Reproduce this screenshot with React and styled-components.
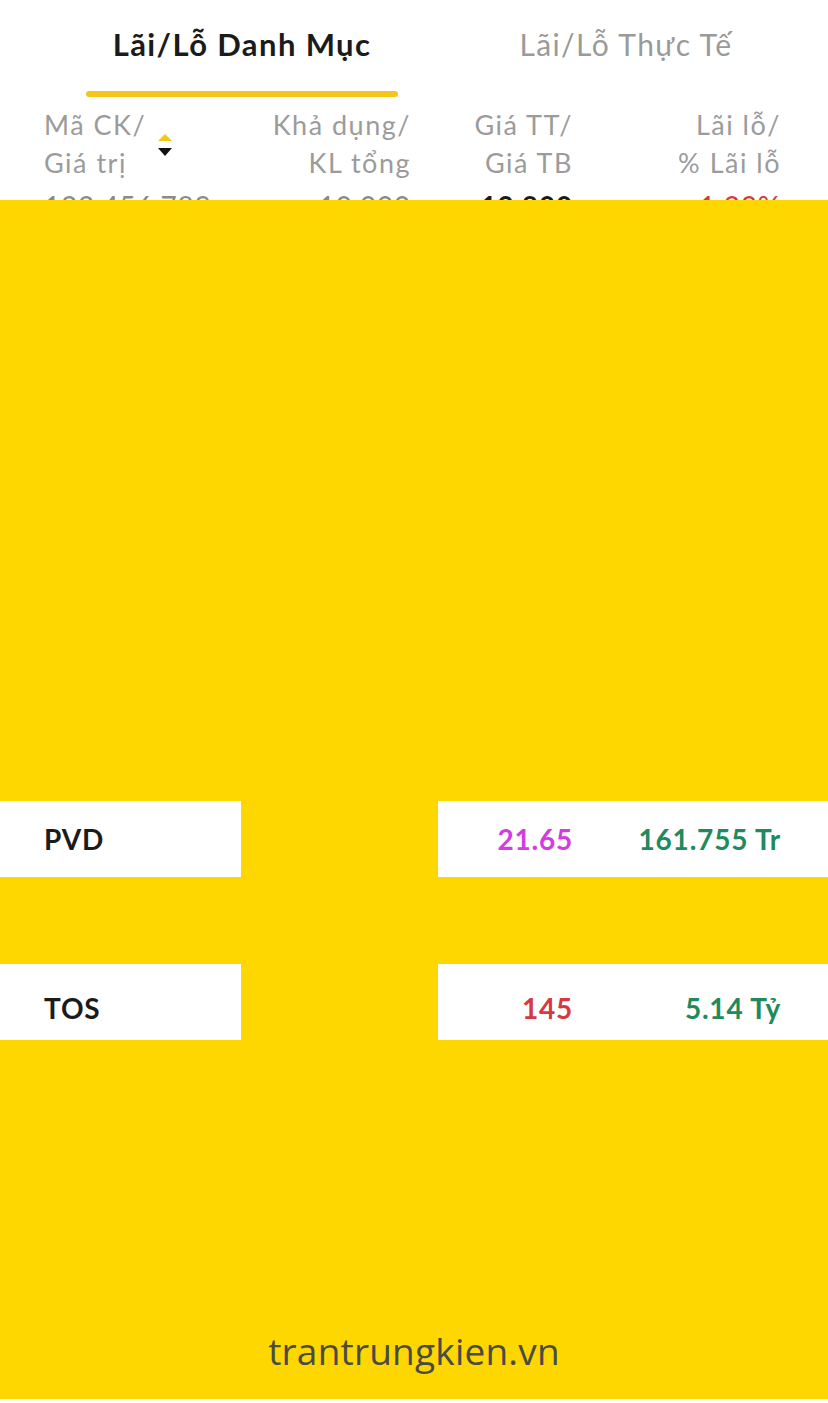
import React from "react";
import styled, { createGlobalStyle } from "styled-components";

const GlobalStyle = createGlobalStyle`
  html, body {
    margin: 0;
    padding: 0;
    background: #ffffff;
  }
  body {
    font-family: "Lato", "Open Sans", sans-serif;
  }
`;

const YELLOW = "#FED700";

const Page = styled.div`
  width: 828px;
  height: 1403px;
  display: flex;
  flex-direction: column;
  background: #ffffff;
`;

const Top = styled.div`
  height: 200px;
  flex-shrink: 0;
  overflow: hidden;
  display: flex;
  flex-direction: column;
  & > * {
    flex-shrink: 0;
  }
`;

const Tabs = styled.div`
  display: flex;
  padding: 0 0 0 50px;
  height: 97px;
`;

const Tab = styled.div`
  width: 384px;
  display: flex;
  flex-direction: column;
  align-items: center;
  padding-top: 23px;
  box-sizing: border-box;
  font-size: ${(p) => (p.active ? 31 : 30)}px;
  line-height: 42px;
  font-weight: ${(p) => (p.active ? 700 : 400)};
  color: ${(p) => (p.active ? "#1b1b1b" : "#9a9a9a")};
  letter-spacing: 1.4px;
`;

const Underline = styled.div`
  margin-top: auto;
  width: 312px;
  height: 6px;
  border-radius: 3px;
  background: ${(p) => (p.show ? "#F6C519" : "transparent")};
`;

const Grid = styled.div`
  display: grid;
  grid-template-columns: 196px 171px 162px 208px;
  padding: 0 47px 0 44px;
`;

const HeadRow = styled(Grid)`
  padding-top: 9px;
`;

const HeadCell = styled.div`
  font-size: 27px;
  line-height: 38px;
  letter-spacing: 1.5px;
  color: #9b9b9b;
  text-align: ${(p) => p.align || "right"};
  display: flex;
  justify-content: ${(p) => (p.align === "left" ? "flex-start" : "flex-end")};
  align-items: center;
  gap: 12px;
`;

const Sort = styled.div`
  display: flex;
  flex-direction: column;
  gap: 7px;
  margin-top: 2px;
`;

const Tri = styled.div`
  width: 0;
  height: 0;
  border-left: 7px solid transparent;
  border-right: 7px solid transparent;
  ${(p) =>
    p.up
      ? `border-bottom: 7px solid #F6C519;`
      : `border-top: 8px solid #111111;`}
`;

const PeekRow = styled(Grid)`
  padding-top: 6px;
`;

const Cell = styled.div`
  font-size: 28px;
  line-height: 36px;
  font-weight: ${(p) => (p.bold ? 700 : 400)};
  color: ${(p) => p.color || "#1b1b1b"};
  text-align: ${(p) => p.align || "right"};
  letter-spacing: 0.8px;
`;

const Mask = styled.div`
  flex: 1;
  background: ${YELLOW};
  display: flex;
  flex-direction: column;
`;

const Gap = styled.div`
  height: ${(p) => p.h}px;
`;

const HoleRow = styled.div`
  height: 76px;
  display: grid;
  grid-template-columns: 241px 197px 1fr;
  align-items: stretch;
`;

const Hole = styled.div`
  background: #ffffff;
  display: grid;
  grid-template-columns: ${(p) => p.cols};
  align-items: center;
  padding: ${(p) => p.pad};
  padding-top: ${(p) => p.shift || 0}px;
`;

const Footer = styled.div`
  margin-top: auto;
  height: 98px;
  display: flex;
  justify-content: center;
  align-items: center;
  font-family: "Open Sans", "Noto Sans", sans-serif;
  font-size: 37px;
  color: #4b4b45;
  letter-spacing: 0.2px;
`;

const BottomEdge = styled.div`
  height: 4px;
  background: #ffffff;
`;

const rows = [
  { code: "PVD", price: "21.65", priceColor: "#D53BE3", pl: "161.755 Tr", shift: 0 },
  { code: "TOS", price: "145", priceColor: "#D8383F", pl: "5.14 Tỷ", shift: 12 },
];

export default function App() {
  return (
    <Page>
      <GlobalStyle />
      <Top>
        <Tabs>
          <Tab active>
            Lãi/Lỗ Danh Mục
            <Underline show />
          </Tab>
          <Tab>
            Lãi/Lỗ Thực Tế
            <Underline />
          </Tab>
        </Tabs>
        <HeadRow>
          <HeadCell align="left">
            <span>
              Mã CK/
              <br />
              Giá trị
            </span>
            <Sort>
              <Tri up />
              <Tri />
            </Sort>
          </HeadCell>
          <HeadCell>
            Khả dụng/
            <br />
            KL tổng
          </HeadCell>
          <HeadCell>
            Giá TT/
            <br />
            Giá TB
          </HeadCell>
          <HeadCell>
            Lãi lỗ/
            <br />
            % Lãi lỗ
          </HeadCell>
        </HeadRow>
        <PeekRow>
          <Cell align="left" color="#8a8a8a">
            122,456,789
          </Cell>
          <Cell color="#8a8a8a">10,000</Cell>
          <Cell bold>19,800</Cell>
          <Cell color="#D8383F">-1.23%</Cell>
        </PeekRow>
      </Top>
      <Mask>
        <Gap h={601} />
        {rows.map((r, i) => (
          <React.Fragment key={r.code}>
            {i > 0 && <Gap h={87} />}
            <HoleRow>
              <Hole cols="1fr" pad="0 0 0 44px" shift={r.shift}>
                <Cell align="left" bold>
                  {r.code}
                </Cell>
              </Hole>
              <div />
              <Hole cols="135px 208px" pad="0 45px 0 0" shift={r.shift}>
                <Cell bold color={r.priceColor}>
                  {r.price}
                </Cell>
                <Cell bold color="#1F8A5B">
                  {r.pl}
                </Cell>
              </Hole>
            </HoleRow>
          </React.Fragment>
        ))}
        <Footer>trantrungkien.vn</Footer>
        <BottomEdge />
      </Mask>
    </Page>
  );
}
